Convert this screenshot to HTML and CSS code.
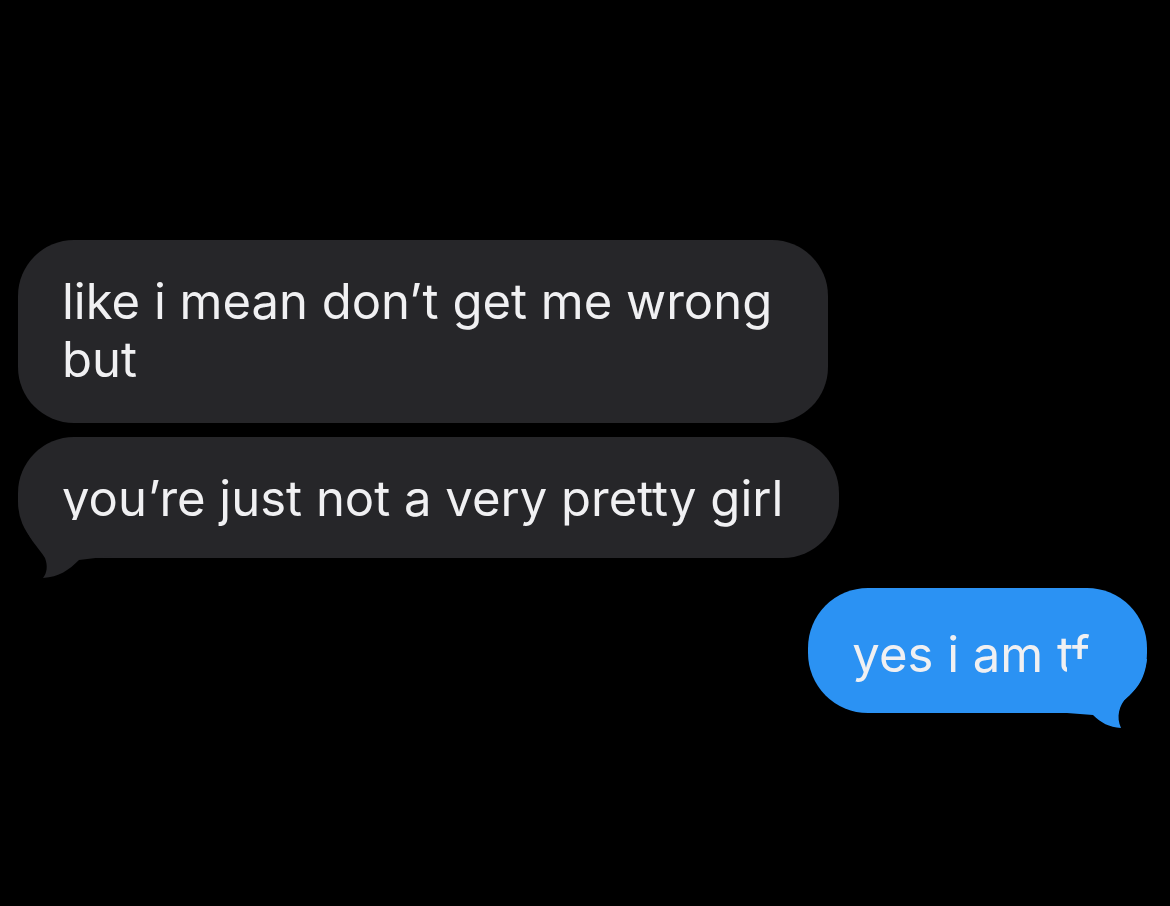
FILE: index.html
```html
<!DOCTYPE html>
<html>
<head>
<meta charset="utf-8">
<link rel="stylesheet" href="styles.css">
</head>
<body>
<main class="thread">
  <div class="bubble gray first">like i mean don’t get me wrong<br>but</div>
  <div class="bubble gray last">you’re just not a very pretty girl<svg class="tail tail-left" width="100" height="60" viewBox="0 0 100 60"><path d="M6 0 C 8 15, 22 28, 28 38 C 31 46, 30 53, 26 58 C 42 57, 52 50, 62 40 L 95 36 L 95 0 Z"/></svg></div>
  <div class="bubble blue">yes i am tf<svg class="tail tail-right" width="80" height="70" viewBox="0 0 80 70"><path d="M80 0 C 78 20, 70 30, 60 38 C 52 46, 49 58, 54 69 C 42 68, 34 64, 26 56 L 0 54 L 0 0 Z"/></svg></div>
</main>
</body>
</html>
```
FILE: styles.css
```css
html, body {
  margin: 0;
  padding: 0;
  background: #000;
  width: 1170px;
  height: 906px;
  overflow: hidden;
}
.thread {
  display: flex;
  flex-direction: column;
  padding: 240px 23px 0 18px;
  font-family: "Inter", "Liberation Sans", sans-serif;
  font-size: 49px;
  line-height: 58px;
  color: #f0f0f2;
  font-variant-ligatures: none;
  font-feature-settings: "liga" 0, "calt" 0;
}
.bubble {
  position: relative;
  border-radius: 56px;
  padding: 33px 56px 34px 44px;
  width: max-content;
}
.gray {
  background: #262629;
  align-self: flex-start;
}
.gray.last {
  margin-top: 14px;
  padding-top: 33px;
  padding-bottom: 30px;
}
.blue {
  background: #2b92f3;
  align-self: flex-end;
  margin-top: 30px;
  padding: 38px 57px 29px 44px;
  border-radius: 60px;
}
.tail {
  position: absolute;
  display: block;
}
.tail-left {
  left: -1px;
  bottom: -22px;
  fill: #262629;
}
.tail-right {
  right: 0;
  bottom: -16px;
  fill: #2b92f3;
}
```
